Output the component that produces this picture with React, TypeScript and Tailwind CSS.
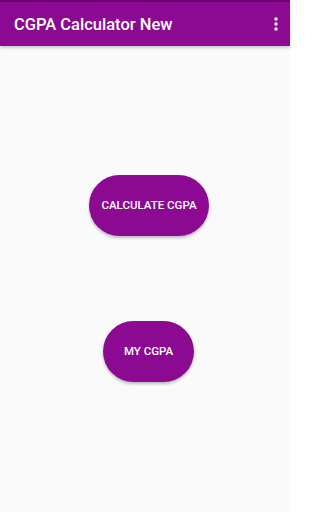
export default function App() {
  return (
    <div className="flex h-[512px] w-[290px] flex-col bg-[#fafafa] font-['Roboto',sans-serif]">
      <div className="h-[2px] bg-[#6a006e]" />
      <header className="flex h-[44px] items-center justify-between bg-[#8b0a91] pl-[14px] pr-[8px] shadow-[0_2px_3px_rgba(0,0,0,0.2)]">
        <h1 className="mt-[2px] text-[16.5px] font-medium text-white">CGPA Calculator New</h1>
        <svg width="12" height="16" viewBox="0 0 12 16" className="fill-white">
          <circle cx="6" cy="3" r="1.7" />
          <circle cx="6" cy="8" r="1.7" />
          <circle cx="6" cy="13" r="1.7" />
        </svg>
      </header>
      <main className="flex flex-col items-center">
        <button className="mt-[129px] ml-[8px] h-[61px] w-[120px] rounded-full bg-[#8b0a91] text-[11.5px] font-medium text-white shadow-[0_2px_3px_rgba(0,0,0,0.25)]">
          CALCULATE CGPA
        </button>
        <button className="mt-[85px] ml-[7px] h-[61px] w-[91px] rounded-full bg-[#8b0a91] text-[11.5px] font-medium text-white shadow-[0_2px_3px_rgba(0,0,0,0.25)]">
          MY CGPA
        </button>
      </main>
    </div>
  )
}
